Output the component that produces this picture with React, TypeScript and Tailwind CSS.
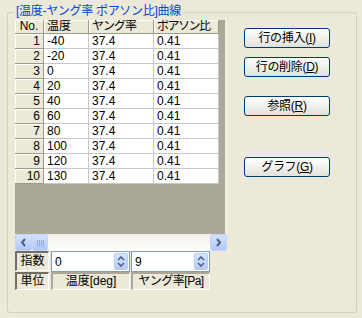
const rows = [
  ['1', '-40'],
  ['2', '-20'],
  ['3', '0'],
  ['4', '20'],
  ['5', '40'],
  ['6', '60'],
  ['7', '80'],
  ['8', '100'],
  ['9', '120'],
  ['10', '130'],
];

const headCell = 'bg-[#ECE9D8] border-r border-b border-[#9D9A8A] shadow-[inset_1px_1px_0_#ffffff] overflow-hidden whitespace-nowrap';
const dataCell = 'bg-white border-r border-b border-[#C8C8C8] pl-[3px] overflow-hidden';

function XpButton({ children }: { children: React.ReactNode }) {
  return (
    <button className="w-[86px] h-[20px] rounded-[3px] border border-[#003C74] bg-gradient-to-b from-[#FFFFFF] to-[#E3E2D9] text-[12px] leading-[18px] text-black text-center tracking-[-0.3px]">
      {children}
    </button>
  );
}

function Spinner() {
  return (
    <div className="w-[14px] h-[17px] rounded-[2px] bg-gradient-to-b from-[#D9E5FD] to-[#B5C9F5] border border-[#B9CCF7] flex items-center justify-center">
      <svg width="8" height="11" viewBox="0 0 8 11">
        <path d="M1 4 L4 1 L7 4" fill="none" stroke="#4D6185" strokeWidth="1.6" />
        <path d="M1 7 L4 10 L7 7" fill="none" stroke="#4D6185" strokeWidth="1.6" />
      </svg>
    </div>
  );
}

function ScrollBtn({ dir }: { dir: 'l' | 'r' }) {
  return (
    <div className="w-[17px] h-[17px] rounded-[2px] bg-gradient-to-b from-[#D5E1FD] to-[#B3C7F5] border border-[#C3D3FD] flex items-center justify-center">
      <svg width="7" height="9" viewBox="0 0 7 9">
        {dir === 'l' ? (
          <path d="M5 1 L2 4.5 L5 8" fill="none" stroke="#4D6185" strokeWidth="2" />
        ) : (
          <path d="M2 1 L5 4.5 L2 8" fill="none" stroke="#4D6185" strokeWidth="2" />
        )}
      </svg>
    </div>
  );
}

export default function App() {
  return (
    <div className="w-[362px] h-[318px] bg-[#ECE9D8] pt-[12px] pl-[7px] text-[12px] text-black font-['Liberation_Sans','Noto_Sans_CJK_JP',sans-serif]">
      <div className="relative w-[350px] h-[301px] border border-[#D0D0BF] rounded-[3px] pt-[7px] pl-[7px] flex">
        <span className="absolute left-[6px] top-[-9px] px-[2px] bg-[#ECE9D8] text-[#0046D5] leading-[14px] tracking-[-0.3px]">
          [温度-ヤング率 ポアソン比]曲線
        </span>

        <div className="w-[212px] flex flex-col">
          {/* grid */}
          <div className="h-[214px] bg-[#ABA899] border-r-2 border-[#F1EFE2]">
            <div className="flex h-[14px] leading-[13px]">
              <div className={`${headCell} w-[29px] text-center`}>No.</div>
              <div className={`${headCell} w-[45px] pl-[3px]`}>温度</div>
              <div className={`${headCell} w-[65px] pl-[3px] tracking-[-1px]`}>ヤング率</div>
              <div className={`${headCell} w-[65px] pl-[3px] tracking-[-1.5px]`}>ポアソン比</div>
            </div>
            {rows.map(([no, t]) => (
              <div key={no} className="flex h-[15px] leading-[14px]">
                <div className={`${headCell} w-[29px] text-right pr-[3px]`}>{no}</div>
                <div className={`${dataCell} w-[45px]`}>{t}</div>
                <div className={`${dataCell} w-[65px]`}>37.4</div>
                <div className={`${dataCell} w-[65px]`}>0.41</div>
              </div>
            ))}
          </div>

          {/* horizontal scrollbar */}
          <div className="flex h-[17px] w-[212px] bg-gradient-to-b from-[#F3F1EC] to-[#FEFEFB]">
            <ScrollBtn dir="l" />
            <div className="w-[16px] h-[17px] rounded-[2px] bg-gradient-to-b from-[#D5E1FD] to-[#B3C7F5] border border-[#C3D3FD] flex items-center justify-center gap-[1px]">
              <span className="w-[1px] h-[6px] bg-[#8AA6EE]" />
              <span className="w-[1px] h-[6px] bg-[#8AA6EE]" />
              <span className="w-[1px] h-[6px] bg-[#8AA6EE]" />
              <span className="w-[1px] h-[6px] bg-[#8AA6EE]" />
            </div>
            <div className="flex-1" />
            <ScrollBtn dir="r" />
          </div>

          {/* 指数 */}
          <div className="flex h-[21px] gap-[1px] items-start">
            <div className="w-[34px] h-[20px] border-t-2 border-l-2 border-[#716F64] border-b border-r border-b-white border-r-white leading-[16px] text-center overflow-hidden">
              指数
            </div>
            <div className="ml-[1px] w-[79px] h-[21px] border border-[#7F9DB9] bg-white flex items-center justify-between pl-[3px] pr-[1px]">
              <span className="leading-[14px]">0</span>
              <Spinner />
            </div>
            <div className="w-[79px] h-[21px] border border-[#7F9DB9] bg-white flex items-center justify-between pl-[3px] pr-[1px]">
              <span className="leading-[14px]">9</span>
              <Spinner />
            </div>
          </div>

          {/* 単位 */}
          <div className="flex h-[18px] gap-[1px] items-start">
            <div className="w-[34px] h-[18px] border-t-2 border-l-2 border-[#716F64] border-b border-r border-b-white border-r-white leading-[14px] text-center overflow-hidden">
              単位
            </div>
            <div className="ml-[1px] w-[79px] h-[18px] border-t-2 border-l-2 border-[#ACA899] border-b border-r border-b-white border-r-white leading-[14px] text-center overflow-hidden">
              温度[deg]
            </div>
            <div className="w-[79px] h-[18px] border-t-2 border-l-2 border-[#ACA899] border-b border-r border-b-white border-r-white leading-[14px] text-center overflow-hidden tracking-[-0.5px]">
              ヤング率[Pa]
            </div>
          </div>
        </div>

        <div className="ml-[17px] pt-[8px] flex flex-col">
          <XpButton>行の挿入(<u>I</u>)</XpButton>
          <div className="h-[9px]" />
          <XpButton>行の削除(<u>D</u>)</XpButton>
          <div className="h-[19px]" />
          <XpButton>参照(<u>R</u>)</XpButton>
          <div className="h-[41px]" />
          <XpButton>グラフ(<u>G</u>)</XpButton>
        </div>
      </div>
    </div>
  );
}
